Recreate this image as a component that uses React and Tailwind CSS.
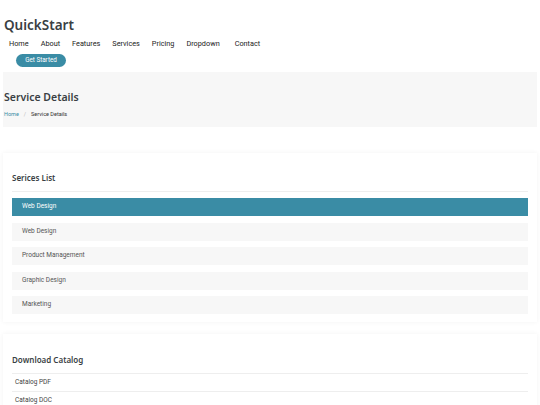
import React from 'react';

const navItems = ['Home', 'About', 'Features', 'Services', 'Pricing', 'Dropdown', 'Contact'];
const services = ['Web Design', 'Web Design', 'Product Management', 'Graphic Design', 'Marketing'];
const catalogs = ['Catalog PDF', 'Catalog DOC'];

const heading = { fontFamily: '"Noto Sans", "Open Sans", sans-serif' };

const App = () => {
  return (
    <div className="w-[540px] h-[405px] overflow-hidden bg-white font-['Roboto',sans-serif] text-[#444]">
      {/* Header */}
      <header className="px-[4px] pt-[15px]">
        <h1 style={heading} className="text-[13.5px] font-semibold leading-[20px] text-[#3a3f44]">QuickStart</h1>
        <nav className="flex items-center pl-[5px] mt-[2px] h-[14px] text-[7.3px] text-[#222]">
          {navItems.map((item, i) => (
            <a key={item} className={i === 5 ? 'mr-[15px]' : 'mr-[12px]'}>{item}</a>
          ))}
        </nav>
        <button className="block ml-[12px] mt-[3px] w-[50px] h-[13px] rounded-full bg-[#3a8ca5] text-white text-[6.3px] font-normal leading-[13px]">
          Get Started
        </button>
      </header>

      {/* Page title */}
      <section className="mx-[3px] mt-[5px] h-[55px] bg-[#f7f7f7] px-[1px] pt-[18px]">
        <h2 style={heading} className="text-[10.5px] font-semibold leading-[14px] text-[#3a3f44]">Service Details</h2>
        <div className="mt-[6px] flex items-center gap-[5px] text-[5.5px]">
          <span className="text-[#3a8ca5]">Home</span>
          <span className="text-[#bbb]">/</span>
          <span className="text-[#333]">Service Details</span>
        </div>
      </section>

      {/* Services list card */}
      <section className="mx-[3px] mt-[26px] bg-white shadow-[0_0_5px_rgba(0,0,0,0.05)] px-[9px] pt-[19px] pb-[8px]">
        <h3 style={heading} className="text-[8px] font-semibold leading-[12px] text-[#3a3f44] pb-[7px] border-b border-[#eee]">Serices List</h3>
        <div className="mt-[6px] flex flex-col gap-[6.5px]">
          {services.map((s, i) => (
            <div
              key={i}
              className={`h-[18px] flex items-center px-[10px] text-[6.5px] ${i === 0 ? 'bg-[#3a8ca5] text-white' : 'bg-[#f7f7f7] text-[#555]'}`}
            >
              {s}
            </div>
          ))}
        </div>
      </section>

      {/* Catalog card */}
      <section className="mx-[3px] mt-[12px] bg-white shadow-[0_0_5px_rgba(0,0,0,0.05)] px-[9px] pt-[20px]">
        <h3 style={heading} className="text-[8px] font-semibold leading-[12px] text-[#3a3f44] pb-[7px] border-b border-[#eee]">Download Catalog</h3>
        <div className="flex flex-col">
          {catalogs.map((c) => (
            <div key={c} className="h-[18px] flex items-center px-[3px] text-[6.5px] text-[#444] border-b border-[#eee]">
              {c}
            </div>
          ))}
        </div>
      </section>
    </div>
  );
};

export default App;
